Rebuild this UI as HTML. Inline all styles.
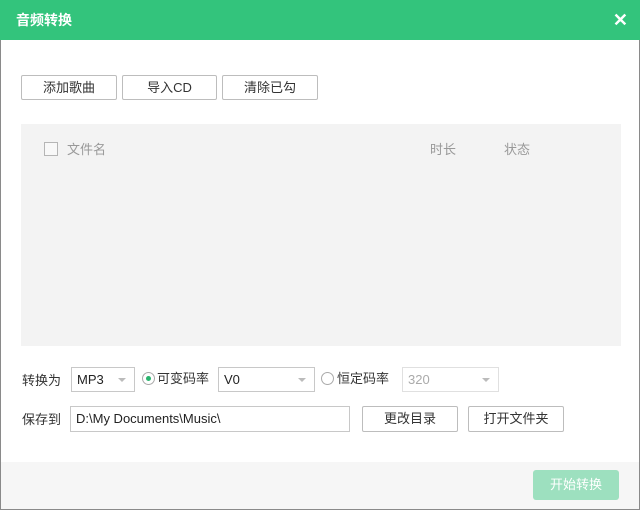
<!DOCTYPE html><html><head><meta charset="utf-8"><style>
*{box-sizing:border-box;margin:0;padding:0}
body{width:640px;height:510px;position:relative;background:#fff;font-family:"Liberation Sans","Noto Sans CJK SC",sans-serif;font-size:13px;color:#333;overflow:hidden}
.win{position:absolute;left:0;top:0;width:640px;height:510px;border:1px solid #8a8a8a;border-top:none}
.tb{position:absolute;left:0;top:0;width:640px;height:40px;background:#33c47c;color:#fff;font-weight:bold;font-size:14px;line-height:40px;padding-left:16px}
.x{position:absolute;right:12px;top:0;font-size:18px;font-weight:bold}
.a{position:absolute}
.btn{position:absolute;border:1px solid #bdbdbd;border-radius:2px;background:#fff;text-align:center;color:#333}
.sel,.inp{position:absolute;border:1px solid #c8c8c8;background:#fff;padding-left:5px;line-height:23px;color:#222}
.sel:after{content:"";position:absolute;right:8px;top:10px;border:4px solid transparent;border-top:4px solid #bbb}
.rad{position:absolute;width:13px;height:13px;border:1px solid #aaa;border-radius:50%;background:#fff}
</style></head><body>
<div class="win"></div>
<div class="tb">音频转换<span class="x">✕</span></div>
<div class="btn" style="left:21px;top:75px;width:96px;height:25px;line-height:23px">添加歌曲</div>
<div class="btn" style="left:122px;top:75px;width:95px;height:25px;line-height:23px">导入CD</div>
<div class="btn" style="left:222px;top:75px;width:96px;height:25px;line-height:23px">清除已勾</div>
<div class="a" style="left:21px;top:124px;width:600px;height:222px;background:#f3f3f3"></div>
<div class="a" style="left:44px;top:142px;width:14px;height:14px;border:1px solid #b5b5b5;background:#f8f8f8"></div>
<div class="a" style="left:67px;top:141px;color:#999;line-height:18px">文件名</div>
<div class="a" style="left:430px;top:141px;color:#999;line-height:18px">时长</div>
<div class="a" style="left:504px;top:141px;color:#999;line-height:18px">状态</div>
<div class="a" style="left:22px;top:372px;line-height:18px">转换为</div>
<div class="sel" style="left:71px;top:367px;width:64px;height:25px">MP3</div>
<div class="rad" style="left:142px;top:372px"><div style="position:absolute;left:3px;top:3px;width:5px;height:5px;border-radius:50%;background:#2ab46e"></div></div>
<div class="a" style="left:157px;top:370px;line-height:18px">可变码率</div>
<div class="sel" style="left:218px;top:367px;width:97px;height:25px">V0</div>
<div class="rad" style="left:321px;top:372px"></div>
<div class="a" style="left:337px;top:370px;line-height:18px">恒定码率</div>
<div class="sel" style="left:402px;top:367px;width:97px;height:25px;border-color:#e0e0e0;color:#aaa">320</div>
<div class="a" style="left:22px;top:411px;line-height:18px">保存到</div>
<div class="inp" style="left:70px;top:406px;width:280px;height:26px;line-height:24px;color:#222">D:\My Documents\Music\</div>
<div class="btn" style="left:362px;top:406px;width:96px;height:26px;line-height:24px">更改目录</div>
<div class="btn" style="left:468px;top:406px;width:96px;height:26px;line-height:24px">打开文件夹</div>
<div class="a" style="left:1px;top:462px;width:638px;height:47px;background:#f6f6f6"></div>
<div class="a" style="left:533px;top:470px;width:86px;height:30px;background:#9de0bf;border-radius:3px;color:#fff;text-align:center;line-height:30px">开始转换</div>
</body></html>
